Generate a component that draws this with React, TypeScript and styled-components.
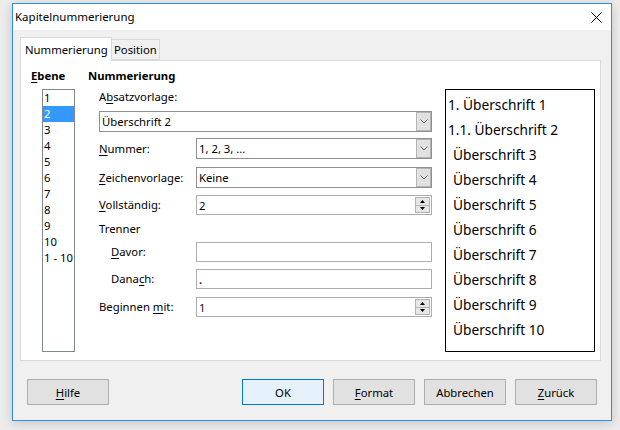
import React from 'react';
import styled, { createGlobalStyle } from 'styled-components';

const Global = createGlobalStyle`
  html, body { margin: 0; padding: 0; background: #e9e9e9; }
  body { font-family: "Segoe UI", "Noto Sans", sans-serif; font-size: 11.3px; color: #000; }
  * { box-sizing: border-box; }
`;

const Screen = styled.div`
  width: 620px;
  height: 430px;
  padding: 3px 8px 0 12px;
  overflow: hidden;
  background: #ececec;
`;

const Window = styled.div`
  width: 600px;
  height: 418px;
  border: 1px solid #2f8de4;
  background: #f0f0f0;
  display: flex;
  flex-direction: column;
  box-shadow: 0 2px 10px rgba(0, 0, 0, 0.18);
`;

const TitleBar = styled.div`
  height: 26px;
  background: #fff;
  display: flex;
  align-items: center;
  padding: 0 9px 0 2px;
  justify-content: space-between;
`;

const Title = styled.span`
  font-size: 11.5px;
  line-height: 16px;
`;

const Body = styled.div`
  flex: 1;
  display: flex;
  flex-direction: column;
  padding: 7px 10px 0 7px;
`;

const TabBar = styled.div`
  display: flex;
  align-items: flex-end;
  height: 23px;
  position: relative;
  z-index: 1;
`;

const Tab = styled.div<{ $active?: boolean }>`
  height: ${p => (p.$active ? 24 : 21)}px;
  margin-bottom: ${p => (p.$active ? -1 : 0)}px;
  padding: ${p => (p.$active ? '0 0 1px 4px' : '0 0 0 2px')};
  width: ${p => (p.$active ? 92 : 48)}px;
  background: ${p => (p.$active ? '#fff' : '#f0f0f0')};
  border: 1px solid #d9d9d9;
  border-bottom: ${p => (p.$active ? 'none' : '1px solid #d9d9d9')};
  border-left: ${p => (p.$active ? '1px solid #d9d9d9' : 'none')};
  display: flex;
  align-items: center;
  white-space: nowrap;
`;

const Panel = styled.div`
  width: 581px;
  height: 301px;
  background: #fff;
  border: 1px solid #d9d9d9;
  display: flex;
  padding: 7px 0 0 10px;
`;

const LeftCol = styled.div`
  width: 57px;
  display: flex;
  flex-direction: column;
`;

const Heading = styled.div`
  font-weight: bold;
  height: 16px;
  line-height: 16px;
  white-space: nowrap;
`;

const ListBox = styled.div`
  margin: 5px 0 0 11px;
  width: 33px;
  height: 263px;
  border: 1px solid #828790;
  display: flex;
  flex-direction: column;
`;

const ListItem = styled.div<{ $selected?: boolean }>`
  height: 16px;
  line-height: 16px;
  padding-left: 1px;
  white-space: nowrap;
  background: ${p => (p.$selected ? '#3399ff' : 'transparent')};
  color: ${p => (p.$selected ? '#fff' : '#000')};
`;

const MidCol = styled.div`
  width: 344px;
  display: flex;
  flex-direction: column;
`;

const Form = styled.div`
  margin-left: 11px;
  display: flex;
  flex-direction: column;
`;

const Row = styled.div<{ $top: number; $h: number }>`
  margin-top: ${p => p.$top}px;
  height: ${p => p.$h}px;
  display: flex;
  align-items: center;
`;

const Label = styled.div<{ $indent?: number }>`
  width: 97px;
  flex: none;
  padding-left: ${p => p.$indent || 0}px;
  line-height: 16px;
  white-space: nowrap;
`;

const Key = styled.span`
  text-decoration: underline;
  text-underline-offset: 2px;
`;

const Combo = styled.div<{ $full?: boolean }>`
  width: ${p => (p.$full ? 333 : 236)}px;
  height: 21px;
  border: 1px solid #8f8f8f;
  background: #fff;
  display: flex;
  align-items: stretch;
`;

const Field = styled.div`
  width: 236px;
  height: 20px;
  border: 1px solid #acacac;
  background: #fff;
  display: flex;
  align-items: stretch;
`;

const Value = styled.div<{ $color?: string; $bold?: boolean }>`
  flex: 1;
  padding-left: 2px;
  display: flex;
  align-items: center;
  white-space: nowrap;
  font-weight: ${p => (p.$bold ? 'bold' : 'normal')};
  color: ${p => p.$color || '#000'};
`;

const DropButton = styled.div`
  width: 15px;
  background: #e1e1e1;
  border: 1px solid #b4b4b4;
  display: flex;
  align-items: center;
  justify-content: center;
`;

const Spin = styled.div`
  width: 15px;
  margin: 1px 1px 1px 0;
  display: flex;
  flex-direction: column;
`;

const SpinHalf = styled.div`
  flex: 1;
  background: #e6e6e6;
  border: 1px solid #b4b4b4;
  display: flex;
  align-items: center;
  justify-content: center;
  & + & { border-top: none; }
`;

const RightCol = styled.div`
  margin-left: 13px;
  padding-top: 21px;
`;

const Preview = styled.div`
  width: 150px;
  height: 263px;
  border: 1px solid #000;
  padding: 2px 0 0 2px;
  display: flex;
  flex-direction: column;
`;

const PreviewLine = styled.div<{ $indent?: number }>`
  height: 25px;
  line-height: 25px;
  font-size: 13.7px;
  padding-left: ${p => p.$indent || 0}px;
  white-space: nowrap;
`;

const ButtonRow = styled.div`
  margin-top: 18px;
  padding: 0 4px 0 7px;
  display: flex;
  gap: 9px;
`;

const Spacer = styled.div`
  flex: 1;
`;

const Button = styled.div<{ $default?: boolean }>`
  width: 82px;
  height: 26px;
  border: 1px solid ${p => (p.$default ? '#0078d7' : '#adadad')};
  background: ${p => (p.$default ? '#e5f1fb' : '#e1e1e1')};
  display: flex;
  align-items: center;
  justify-content: center;
  white-space: nowrap;
`;

const Chevron = () => (
  <svg width="8" height="5" viewBox="0 0 8 5">
    <polyline points="0.5,0.5 4,4 7.5,0.5" fill="none" stroke="#606060" strokeWidth="1" />
  </svg>
);

const Arrow = ({ up }: { up?: boolean }) => (
  <svg width="5" height="3" viewBox="0 0 5 3">
    <polygon points={up ? '0,3 5,3 2.5,0' : '0,0 5,0 2.5,3'} fill="#000" />
  </svg>
);

const CloseIcon = () => (
  <svg width="11" height="11" viewBox="0 0 11 11">
    <path d="M0.5 0.5 L10.5 10.5 M10.5 0.5 L0.5 10.5" stroke="#000" strokeWidth="1" />
  </svg>
);

const levels = ['1', '2', '3', '4', '5', '6', '7', '8', '9', '10', '1 - 10'];

const previews: { text: string; indent: number }[] = [
  { text: '1. Überschrift 1', indent: 0 },
  { text: '1.1. Überschrift 2', indent: 0 },
  ...[3, 4, 5, 6, 7, 8, 9, 10].map(n => ({ text: `Überschrift ${n}`, indent: 5 })),
];

export default function App() {
  return (
    <>
      <Global />
      <Screen>
        <Window>
          <TitleBar>
            <Title>Kapitelnummerierung</Title>
            <CloseIcon />
          </TitleBar>
          <Body>
            <TabBar>
              <Tab $active>Nummerierung</Tab>
              <Tab>Position</Tab>
            </TabBar>
            <Panel>
              <LeftCol>
                <Heading><Key>E</Key>bene</Heading>
                <ListBox>
                  {levels.map(l => (
                    <ListItem key={l} $selected={l === '2'}>{l}</ListItem>
                  ))}
                </ListBox>
              </LeftCol>
              <MidCol>
                <Heading>Nummerierung</Heading>
                <Form>
                  <Row $top={5} $h={16}>
                    <Label>A<Key>b</Key>satzvorlage:</Label>
                  </Row>
                  <Row $top={6} $h={21}>
                    <Combo $full>
                      <Value>Überschrift 2</Value>
                      <DropButton><Chevron /></DropButton>
                    </Combo>
                  </Row>
                  <Row $top={6} $h={21}>
                    <Label><Key>N</Key>ummer:</Label>
                    <Combo>
                      <Value>1, 2, 3, ...</Value>
                      <DropButton><Chevron /></DropButton>
                    </Combo>
                  </Row>
                  <Row $top={8} $h={21}>
                    <Label><Key>Z</Key>eichenvorlage:</Label>
                    <Combo>
                      <Value>Keine</Value>
                      <DropButton><Chevron /></DropButton>
                    </Combo>
                  </Row>
                  <Row $top={7} $h={20}>
                    <Label><Key>V</Key>ollständig:</Label>
                    <Field>
                      <Value>2</Value>
                      <Spin>
                        <SpinHalf><Arrow up /></SpinHalf>
                        <SpinHalf><Arrow /></SpinHalf>
                      </Spin>
                    </Field>
                  </Row>
                  <Row $top={6} $h={16}>
                    <Label>Trenner</Label>
                  </Row>
                  <Row $top={5} $h={20}>
                    <Label $indent={12}><Key>D</Key>avor:</Label>
                    <Field>
                      <Value />
                    </Field>
                  </Row>
                  <Row $top={7} $h={20}>
                    <Label $indent={12}>Dana<Key>c</Key>h:</Label>
                    <Field>
                      <Value $color="#5a0020" $bold>.</Value>
                    </Field>
                  </Row>
                  <Row $top={8} $h={20}>
                    <Label>Beginnen <Key>m</Key>it:</Label>
                    <Field>
                      <Value $color="#2a0a30">1</Value>
                      <Spin>
                        <SpinHalf><Arrow up /></SpinHalf>
                        <SpinHalf><Arrow /></SpinHalf>
                      </Spin>
                    </Field>
                  </Row>
                </Form>
              </MidCol>
              <RightCol>
                <Preview>
                  {previews.map(p => (
                    <PreviewLine key={p.text} $indent={p.indent}>{p.text}</PreviewLine>
                  ))}
                </Preview>
              </RightCol>
            </Panel>
            <ButtonRow>
              <Button><span><Key>H</Key>ilfe</span></Button>
              <Spacer />
              <Button $default>OK</Button>
              <Button><span><Key>F</Key>ormat</span></Button>
              <Button>Abbrechen</Button>
              <Button><span><Key>Z</Key>urück</span></Button>
            </ButtonRow>
          </Body>
        </Window>
      </Screen>
    </>
  );
}
